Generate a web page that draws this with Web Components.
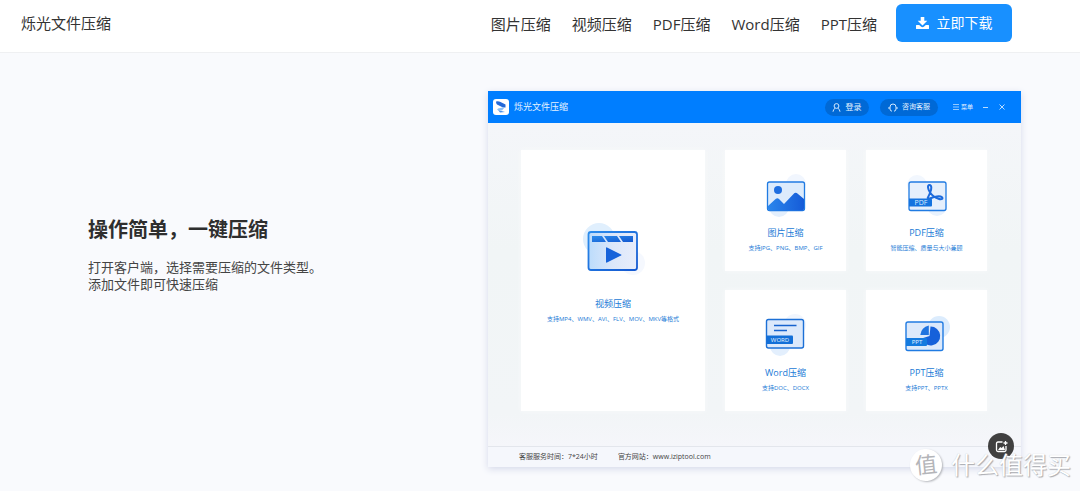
<!DOCTYPE html>
<html lang="zh-CN">
<head>
<meta charset="utf-8">
<meta name="viewport" content="width=device-width, initial-scale=1">
<title>烁光文件压缩</title>
<style>
html, body { height: 100%; }
body { margin: 0; background: #f9fafd; color: #333; font: 15px/20px "Open Sans", "Noto Sans CJK SC", sans-serif; }
</style>
</head>
<body>
<site-page></site-page>

<template id="t-page">
<style>
:host { display: block; position: relative; min-height: 100vh; overflow: hidden; }
</style>
<site-header>
  <span slot="brand">烁光文件压缩</span>
  <nav-link>图片压缩</nav-link>
  <nav-link>视频压缩</nav-link>
  <nav-link>PDF压缩</nav-link>
  <nav-link>Word压缩</nav-link>
  <nav-link>PPT压缩</nav-link>
</site-header>
<hero-section>
  <span slot="title">操作简单，一键压缩</span>
  <span slot="text">打开客户端，选择需要压缩的文件类型。<br>添加文件即可快速压缩</span>
  <app-window></app-window>
</hero-section>
<source-mark></source-mark>
</template>

<template id="t-header">
<style>
:host { display: block; background: #fff; border-bottom: 1px solid #eff0f2; }
header { display: flex; align-items: center; justify-content: space-between; height: 52px; padding: 0 68px 0 21px; box-sizing: border-box; }
.brand { margin-bottom: 6px; }
.right { display: flex; align-items: center; margin-bottom: 6px; }
nav { display: flex; gap: 21px; margin-right: 19px; padding-top: 2px; }
button { display: flex; align-items: center; justify-content: center; gap: 8px; width: 116px; height: 38px; padding: 0; border: 0; border-radius: 6px; background: #1890ff; color: #fff; font: inherit; font-size: 14px; cursor: pointer; }
</style>
<header>
  <div class="brand"><slot name="brand"></slot></div>
  <div class="right">
    <nav><slot></slot></nav>
    <button type="button">
      <svg width="13" height="12" viewBox="0 0 13 12" fill="#fff" aria-hidden="true"><path d="M4.700 0h3.600v3.800h3L6.500 8.500 1.700 3.800h3z"/><path d="M.6 8h2.600l2 1.700q1.300.9 2.600 0l2-1.700h2.600q.6 0 .6.600v2.800q0 .6-.6.600H.6q-.6 0-.6-.6V8.600Q0 8 .6 8z"/></svg>
      <span>立即下载</span>
    </button>
  </div>
</header>
</template>

<template id="t-link">
<style>
:host { display: block; }
a { color: inherit; text-decoration: none; white-space: nowrap; }
</style>
<a href="#"><slot></slot></a>
</template>

<template id="t-hero">
<style>
:host { display: block; padding: 38px 59px 24px 88px; }
section { display: grid; grid-template-columns: 400fr 533fr; align-items: start; }
.copy { padding-top: 126px; }
h1 { margin: 0 0 16px; font-size: 20px; line-height: 26px; font-weight: 700; color: #2e2e2e; }
p { margin: 0; font-size: 13px; line-height: 17px; color: #444; }
</style>
<section>
  <div class="copy">
    <h1><slot name="title"></slot></h1>
    <p><slot name="text"></slot></p>
  </div>
  <slot></slot>
</section>
</template>

<template id="t-window">
<style>
:host { display: block; position: relative; background: #f4f6f9; box-shadow: 0 2px 7px #d5d9ea; }
.bar { display: flex; align-items: center; height: 32px; padding: 0 15px 0 5px; background: #007eff; color: #e4f2ff; font-size: 9px; line-height: 16px; }
.bar .name { margin-left: 5px; flex: 1; font-size: 9px; }
button { display: flex; align-items: center; justify-content: center; padding: 0; border: 0; background: none; color: inherit; font: inherit; cursor: pointer; }
.pill { gap: 4px; height: 17px; border-radius: 9px; background: #0069d6; font-size: 8px; }
.login { width: 44px; margin-right: 11px; }
.help { width: 58px; margin-right: 15px; font-size: 7px; }
.menu { gap: 2px; font-size: 6px; margin-right: 9px; }
.min { margin-right: 9px; }
.cards { display: grid; grid-template-columns: 184fr 121fr 121fr; grid-template-rows: 121px 121px; gap: 19px 20px; padding: 27px 34px 35px 33px; background: linear-gradient(#f4f6f9, #f1f5f6 40%, #f2f5f7 90%, #f5f6fa); }
.tall { grid-row: span 2; }
footer { display: flex; gap: 20px; padding: 0 31px; border-top: 1px solid #e3e6ec; background: #f5f7fc; font-size: 7px; line-height: 20px; color: #444; }
.add { position: absolute; right: 7px; bottom: 8px; width: 26px; height: 26px; border-radius: 50%; background: #404040; }
</style>
<div class="bar">
  <svg width="16" height="16" viewBox="0 0 16 16" aria-hidden="true"><rect width="16" height="16" rx="3" fill="#fff"/><path d="M3 2.500q2-.8 4 .2l5.500 2.800v3L10 8.500 4 5.500Q3 4.500 3 2.500z" fill="#2469d8"/><path d="M12 8L5 9.500 4 11l5 .5z" fill="#8fc2f7"/><path d="M5 11l7 2-5 .5z" fill="#4a91ea"/></svg>
  <span class="name">烁光文件压缩</span>
  <button type="button" class="pill login"><svg width="9" height="9" viewBox="0 0 9 9" fill="none" stroke="#d5eaff" aria-hidden="true"><circle cx="4.500" cy="3" r="2.400"/><path d="M1 8.700q.3-2.600 2.200-3.500M8 8.700Q7.700 6.100 5.800 5.200"/></svg>登录</button>
  <button type="button" class="pill help"><svg width="10" height="9" viewBox="0 0 10 9" fill="none" stroke="#d5eaff" aria-hidden="true"><path d="M2 6V4a3 3 0 0 1 6 0v2M1 4v2M9 4v2M2 6q0 2 2 2.200M8 6q0 2-2 2.200"/></svg>咨询客服</button>
  <button type="button" class="menu"><svg width="6" height="6" viewBox="0 0 6 6" stroke="#b9dcff" aria-hidden="true"><path d="M0 .5h6M0 3h6M0 5.500h6" stroke-width=".8"/></svg>菜单</button>
  <button type="button" class="min" aria-label="最小化"><svg width="7" height="7" viewBox="0 0 7 7" stroke="#b9dcff" aria-hidden="true"><path d="M1 3.500h5"/></svg></button>
  <button type="button" aria-label="关闭"><svg width="8" height="8" viewBox="0 0 8 8" stroke="#cde6ff" stroke-width=".9" aria-hidden="true"><path d="M1.500 1.500l5 5M6.500 1.500l-5 5"/></svg></button>
</div>
<div class="cards">
  <format-card class="tall">
    <svg slot="icon" width="84" height="71" viewBox="0 0 84 71" aria-hidden="true">
      <defs>
        <linearGradient id="gv" x2="1" y2="1"><stop stop-color="#2b8cec"/><stop offset="1" stop-color="#1458d0"/></linearGradient>
        <linearGradient id="pv" x2="1"><stop stop-color="#bcdcfb"/><stop offset=".5" stop-color="#dce7fa"/><stop offset="1" stop-color="#e8edfb"/></linearGradient>
      </defs>
      <circle cx="28" cy="20" r="16" fill="#e0effd"/><circle cx="62" cy="44" r="12" fill="#f5f8fe"/>
      <rect x="17.500" y="13" width="48.500" height="38" rx="2.500" fill="url(#pv)" stroke="url(#gv)" stroke-width="1.800"/>
      <path d="M21 17h10l4 6H21zM33 17h13l4 6H37zM48 17h14v6H52z" fill="url(#gv)"/>
      <path d="M35 29q0-1 1-.5l14 7q1 .5 0 1l-14 7q-1 .5-1-.5z" fill="#1763da"/>
    </svg>
    <span slot="name">视频压缩</span>支持MP4、WMV、AVI、FLV、MOV、MKV等格式
  </format-card>
  <format-card>
    <svg slot="icon" width="56" height="46" viewBox="0 0 56 46" aria-hidden="true">
      <defs><linearGradient id="gi" x2="1"><stop stop-color="#2a86ec"/><stop offset="1" stop-color="#155bd8"/></linearGradient></defs>
      <circle cx="38" cy="11" r="10" fill="#f1f6fe"/><circle cx="21" cy="34" r="10" fill="#e3effd"/>
      <rect x="9.500" y="9" width="37" height="28.500" rx="2" fill="#dcebfc" stroke="#207be2" stroke-width="1.300"/>
      <circle cx="20" cy="17" r="4" fill="#1e6ee0"/>
      <path d="M10 33l6.500-6q2.500-3 4.500-1l5 5 9.500-10q2-2.500 4.500 0l6 5v9.500q0 2-2 2H12q-2 0-2-2z" fill="url(#gi)"/>
    </svg>
    <span slot="name">图片压缩</span>支持JPG、PNG、BMP、GIF
  </format-card>
  <format-card>
    <svg slot="icon" width="56" height="46" viewBox="0 0 56 46" aria-hidden="true">
      <circle cx="18" cy="12" r="10" fill="#f2f7fe"/><circle cx="38" cy="33" r="10" fill="#e8f2fe"/>
      <rect x="10" y="9" width="37" height="28.500" rx="2" fill="#e5effc" stroke="#207be2" stroke-width="1.300"/>
      <path d="M30.500 12c2.500 0 2 4.500.8 7-1 3-2.300 5-2.800 6.500M30.500 12c-2.500 0-1.500 4.500.5 7.500s5 5 8.500 6.300 4.700-.3 3.500-1.500c-2-1.800-8-.5-13 1.500-3 1.200-3 3-1.500 3" fill="none" stroke="#1c6adc" stroke-width="2"/>
      <path d="M10 25.500h22q1 0 1 1v6q0 1-1 1H10z" fill="#1473df"/>
      <text x="22" y="32" text-anchor="middle" font-size="7" fill="#dcefff">PDF</text>
    </svg>
    <span slot="name">PDF压缩</span>智能压缩、质量与大小兼顾
  </format-card>
  <format-card>
    <svg slot="icon" width="56" height="46" viewBox="0 0 56 46" aria-hidden="true">
      <circle cx="37" cy="12" r="11" fill="#f1f6fe"/><circle cx="22" cy="33" r="10" fill="#e3effd"/>
      <rect x="8.500" y="6.500" width="37" height="28.500" rx="2" fill="#dce9fb" stroke="#1c70d6" stroke-width="1.400"/>
      <path d="M16 12.500h22.500M16 17.500h13" stroke="#1763ce" stroke-width="1.700"/>
      <path d="M8.500 22.500H34q1 0 1 1V30q0 1-1 1H8.500z" fill="#126fd8"/>
      <text x="22" y="29" text-anchor="middle" font-size="6" fill="#e6f3ff">WORD</text>
    </svg>
    <span slot="name">Word压缩</span>支持DOC、DOCX
  </format-card>
  <format-card>
    <svg slot="icon" width="56" height="46" viewBox="0 0 56 46" aria-hidden="true">
      <circle cx="40" cy="14" r="11" fill="#dcecfd"/>
      <rect x="7" y="9" width="37" height="28.500" rx="2" fill="#dce9fb" stroke="#207be2" stroke-width="1.400"/>
      <path d="M31.500 13.500a9.500 9.500 0 1 1-9 12l8-2.500z" fill="#1661da"/>
      <path d="M29.800 12.500v9.500h-8.500q1-8 8.500-9.500z" fill="#1f73df"/>
      <path d="M7 25h20q1 0 1 1V32q0 1-1 1H7z" fill="#147adf"/>
      <text x="18" y="31" text-anchor="middle" font-size="6" fill="#e6f3ff">PPT</text>
    </svg>
    <span slot="name">PPT压缩</span>支持PPT、PPTX
  </format-card>
</div>
<footer><span>客服服务时间：7*24小时</span><span>官方网站：www.iziptool.com</span></footer>
<button type="button" class="add" aria-label="添加图片"><svg width="13" height="13" viewBox="0 0 13 13" fill="none" stroke="#fff" stroke-width="1.300" aria-hidden="true"><path d="M7.500 2H3Q1.500 2 1.500 3.500v6.500Q1.500 11.500 3 11.500h6.500q1.500 0 1.500-1.500V6M8.500 3h4M10.500 1v4"/><path d="M3 10l2.200-3 1.500 1 1.800-2 1.500 4z" fill="#fff" stroke="none"/></svg></button>
</template>

<template id="t-card">
<style>
:host { display: flex; flex-direction: column; align-items: center; box-sizing: border-box; padding-top: 23px; background: #fff; box-shadow: 0 0 4px #f8fafb; color: #1a7ad6; white-space: nowrap; }
:host(.tall) { padding-top: 69px; }
.name { margin-top: 8px; font-size: 9px; line-height: 12px; }
.note { margin-top: 4px; font-size: 6px; line-height: 10px; }
::slotted(svg) { display: block; }
</style>
<slot name="icon"></slot>
<div class="name"><slot name="name"></slot></div>
<div class="note"><slot></slot></div>
</template>

<template id="t-mark">
<style>
:host { position: absolute; right: 9px; bottom: 10px; display: flex; align-items: center; gap: 9px; color: #fff; font-size: 24px; line-height: 32px; text-shadow: 1px 1px 1px #a9abb0, 0 0 1px #c5c7cc; pointer-events: none; }
.seal { width: 32px; height: 32px; border-radius: 50%; background: #fff; box-shadow: 1px 1px 2px #b5b7bc; color: #b4b5b9; text-align: center; text-shadow: none; font-size: 22px; line-height: 31px; rotate: -6deg; }
</style>
<span class="seal">值</span><span>什么值得买</span>
</template>

<script>
const define = (name, id) => customElements.define(name, class extends HTMLElement {
  constructor() {
    super();
    this.attachShadow({ mode: "open" }).append(document.getElementById(id).content.cloneNode(true));
  }
});
define("nav-link", "t-link");
define("format-card", "t-card");
define("site-header", "t-header");
define("app-window", "t-window");
define("hero-section", "t-hero");
define("source-mark", "t-mark");
define("site-page", "t-page");
</script>
</body>
</html>
